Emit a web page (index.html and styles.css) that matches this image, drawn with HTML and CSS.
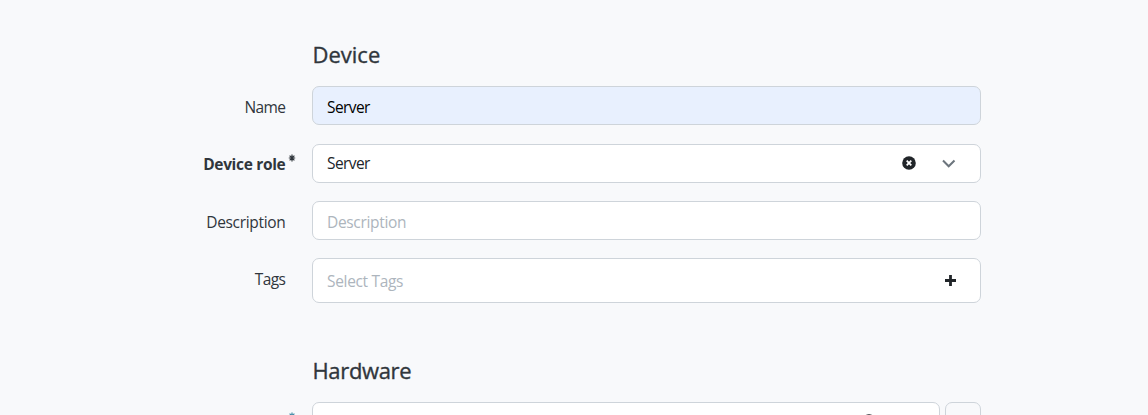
FILE: index.html
```html
<!DOCTYPE html>
<html lang="en">
<head>
<meta charset="utf-8">
<title>Device</title>
<link rel="stylesheet" href="styles.css">
</head>
<body>
<form class="form">
  <section class="group">
    <h5 class="heading"><span class="t-device">Device</span></h5>
    <div class="row"><label class="label"><span class="t-name">Name</span></label><div class="control filled"><span class="t-server">Server</span></div></div>
    <div class="row"><label class="label required"><span class="t-role">Device role</span><svg class="star" viewBox="0 0 8 8"><path d="M4 .5v7M.8 4h6.4M1.6 1.6l4.8 4.8M6.4 1.6L1.6 6.4"/></svg></label><div class="control selected"><span class="t-server">Server</span><svg class="clear" viewBox="0 0 14 14"><circle cx="7" cy="7" r="6.8"/><path d="M4.7 4.7l4.6 4.6M9.3 4.7L4.7 9.3"/></svg><svg class="chevron" viewBox="0 0 14 14"><path d="M1 4.5L6.7 10.3l5.8-5.8"/></svg></div></div>
    <div class="row"><label class="label"><span class="t-desc">Description</span></label><div class="control placeholder"><span class="t-desc">Description</span></div></div>
    <div class="row"><label class="label"><span class="t-tags">Tags</span></label><div class="control placeholder tall"><span class="t-select">Select Tags</span><svg class="plus" viewBox="0 0 11 11"><path d="M5.5 0v11M0 5.5h11"/></svg></div></div>
  </section>
  <section class="group">
    <h5 class="heading"><span class="t-hardware">Hardware</span></h5>
    <div class="row"><label class="label hint"><svg class="star" viewBox="0 0 8 8"><path d="M4 .5v7M.8 4h6.4M1.6 1.6l4.8 4.8M6.4 1.6L1.6 6.4"/></svg></label><div class="control"><svg class="clear hardware-clear" viewBox="0 0 14 14"><circle cx="7" cy="7" r="6.8"/></svg></div><div class="control button"></div></div>
  </section>
</form>
</body>
</html>
```
FILE: styles.css
```css
* { box-sizing: border-box; }
html, body { height: 100%; overflow: hidden; }
body { margin: 0; background: #f8f9fb; color: #30363c; font: 15.5px/24px "Open Sans", "Noto Sans", sans-serif; }
.form { width: 813px; height: 415px; overflow: hidden; margin-left: 168px; padding-top: 42px; }
.group { margin-bottom: 55px; }
.heading { margin: 0 0 20px 144.5px; font-size: 22px; line-height: 24px; font-weight: 500; -webkit-text-stroke: 0.35px #30363c; }
.row { display: flex; margin-bottom: 18px; }
.row:nth-of-type(1) { margin-bottom: 19px; }
.label { width: 144px; padding-right: 27px; padding-top: 9px; text-align: right; position: relative; }
.label > span { margin-right: -0.4px; }
.control { flex: 1; display: flex; align-items: center; height: 39px; padding: 0 14px; border: 1px solid #ced4da; border-radius: 7px; background: #fff; color: #212529; }
.filled { background: #e8f0fe; color: #000; }
.filled > span { padding-top: 2px; }
.selected { padding-bottom: 1px; }
.placeholder > span { color: #adb5bd; }
.placeholder > .t-desc { padding-top: 2px; }
.tall { height: 45px; }
.required { font-weight: 700; padding-top: 8px; }
.t-device { letter-spacing: 0; }
.t-hardware { letter-spacing: -0.35px; }
.t-name { letter-spacing: -0.6px; }
.t-server { letter-spacing: -0.58px; }
.t-role, .t-desc, .t-select { letter-spacing: -0.33px; }
.t-tags { letter-spacing: -0.6px; }
.star { position: absolute; right: 16px; top: 10px; width: 8px; height: 8px; stroke: #30363c; stroke-width: 1.2; }
.hint .star { stroke: #3f8aa6; }
.clear { width: 14px; height: 14px; margin-left: auto; margin-right: 26px; fill: #212529; stroke: none; }
.clear path { stroke: #fff; stroke-width: 1.8; }
.hardware-clear { align-self: flex-start; margin-top: 11px; margin-right: 49px; }
.chevron { width: 14px; height: 14px; margin-right: 10px; fill: none; stroke: #6c757d; stroke-width: 2; }
.plus { width: 11px; height: 11px; margin-left: auto; margin-right: 10px; stroke: #212529; stroke-width: 2.8; }
.button { flex: 0 0 36px; margin-left: 5px; background: #f8f9fb; }
```
